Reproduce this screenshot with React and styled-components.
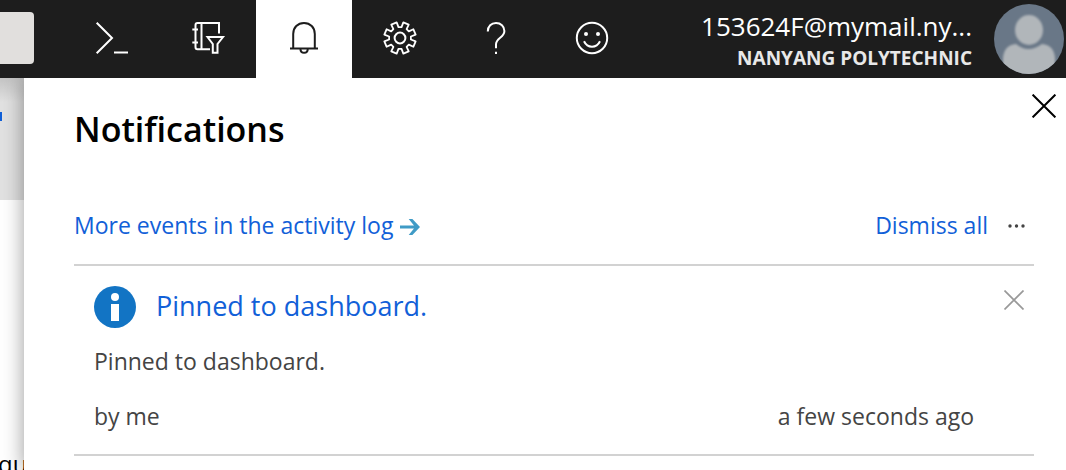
import React from 'react';
import styled, { createGlobalStyle } from 'styled-components';

const GlobalStyle = createGlobalStyle`
  * { box-sizing: border-box; }
  html, body { margin: 0; height: 100%; }
  body {
    overflow: hidden;
    background: #fff;
    color: #000;
    font-family: "Open Sans", "Noto Sans", sans-serif;
    font-size: 23px;
    line-height: 32px;
  }
  #root { height: 100%; }
  button, input { font: inherit; border: 0; padding: 0; margin: 0; }
  button { background: none; color: inherit; cursor: pointer; }
  h1, h2, p { margin: 0; }
  svg { display: block; flex: none; }
`;

const Page = styled.div`
  display: flex;
  flex-direction: column;
  height: 100%;
`;

const TopBar = styled.header`
  display: flex;
  align-items: center;
  flex: none;
  height: 78px;
  padding-right: 2px;
  background: #1d1d1d;
  color: #fff;
`;

const SearchBox = styled.input`
  width: 34px;
  height: 52px;
  margin: 0 30px 2px 0;
  border-radius: 0 4px 4px 0;
  background: #e1dfdd;
`;

const BarButton = styled.button`
  display: flex;
  align-items: center;
  justify-content: center;
  flex: none;
  width: 96px;
  height: 78px;
  background: ${(p) => (p.$active ? '#fff' : 'transparent')};
  color: ${(p) => (p.$active ? '#1d1d1d' : '#fff')};
`;

const Account = styled.button`
  display: flex;
  align-items: center;
  gap: 22px;
  margin-left: auto;
  text-align: right;
`;

const AccountText = styled.span`
  display: flex;
  flex-direction: column;
  padding-top: 6px;
  line-height: 32px;
`;

const Email = styled.span`
  font-size: 26px;
  font-weight: 500;
`;

const Org = styled.span`
  color: #e8e8e8;
  font-size: 19px;
  font-weight: 700;
`;

const Main = styled.div`
  display: flex;
  flex: 1;
  min-height: 0;
`;

const Backdrop = styled.div`
  display: flex;
  flex-direction: column;
  flex: none;
  width: 24px;
  overflow: hidden;
  font-size: 24px;
`;

const BackdropHeader = styled.div`
  flex: none;
  height: 122px;
  padding-top: 34px;
  background: linear-gradient(#c4c4c4, #e1e1e1 24px);
`;

const LinkEdge = styled.div`
  width: 2px;
  height: 9px;
  background: #1160d8;
`;

const BackdropText = styled.span`
  margin: 248px 0 0 -2px;
  white-space: nowrap;
`;

const Panel = styled.section`
  position: relative;
  flex: 1;
  background: #fff;
  box-shadow: 0 0 20px rgba(0, 0, 0, 0.4);
  clip-path: inset(0 0 0 -24px);
`;

const PanelHeader = styled.div`
  display: flex;
  align-items: flex-start;
  justify-content: space-between;
  padding: 16px 10px 0 50px;
`;

const Title = styled.h1`
  margin-top: 11px;
  font-size: 34px;
  font-weight: 600;
  line-height: 48px;
`;

const IconButton = styled.button`
  display: flex;
  align-items: center;
  color: ${(p) => p.$tone || '#000'};
`;

const PanelBody = styled.div`
  padding: 0 32px 0 50px;
`;

const Actions = styled.div`
  display: flex;
  align-items: center;
  gap: 20px;
  padding: 56px 8px 23px 0;
`;

const ActivityLink = styled.a`
  display: flex;
  align-items: center;
  gap: 6px;
  margin-right: auto;
  color: #1160d8;
  text-decoration: none;
`;

const DismissAll = styled.button`
  color: #1160d8;
`;

const Item = styled.article`
  padding: 20px 10px 22px 20px;
  border: solid #d2d2d2;
  border-width: 2px 0;
`;

const ItemHeader = styled.div`
  display: flex;
  align-items: flex-start;
  gap: 20px;
`;

const ItemTitle = styled.h2`
  flex: 1;
  font-size: 27px;
  font-weight: 400;
  line-height: 40px;

  a { color: #1160d8; text-decoration: none; }
`;

const DismissButton = styled(IconButton)`
  margin-top: 4px;
`;

const ItemText = styled.p`
  margin-top: 17px;
  color: #444;
`;

const ItemMeta = styled.div`
  display: flex;
  justify-content: space-between;
  margin-top: 23px;
  padding-right: 50px;
  color: #444;
`;

const gearPath = (() => {
  const points = [];
  for (let tooth = 0; tooth < 8; tooth += 1) {
    [[8, 11], [12, 16], [33, 16], [37, 11]].forEach(([angle, radius]) => {
      const a = ((tooth * 45 + angle) * Math.PI) / 180;
      points.push(`${(20 + radius * Math.sin(a)).toFixed(2)} ${(19 - radius * Math.cos(a)).toFixed(2)}`);
    });
  }
  return `M${points.join('L')}Z`;
})();

const BarIcon = ({ children }) => (
  <svg width="40" height="40" viewBox="0 0 40 40" fill="none" stroke="currentColor" strokeWidth="2" aria-hidden="true">
    {children}
  </svg>
);

const ShellIcon = () => (
  <BarIcon><path d="M4.7 3.8L20 19L4.7 34.2M22 33.5H36" /></BarIcon>
);

const DirectoryIcon = () => (
  <BarIcon>
    <path d="M31 14.5V4H9.5Q7.5 4 7.5 6V28Q7.5 30.2 9.5 30.2H22M13.5 4V30M4.3 10.5H10M4.3 23.5H10" />
    <path d="M19.5 18H35L29.5 25V33.8H24.8V25Z" />
  </BarIcon>
);

const BellIcon = () => (
  <BarIcon>
    <path d="M9.2 29V15C9.2 8.5 13.8 4 20 4S30.8 8.5 30.8 15V29M6 29.4H34M16.4 29.4C16.4 35.2 23.8 35.2 23.8 29.4" />
  </BarIcon>
);

const GearIcon = () => (
  <BarIcon>
    <path d={gearPath} strokeLinejoin="round" strokeWidth="1.8" />
    <circle cx="20" cy="19" r="5.4" />
  </BarIcon>
);

const HelpIcon = () => (
  <BarIcon>
    <path d="M11.8 12.4C11.8 7.2 15.3 4 20 4S28.4 7.2 28.4 12C28.4 18.5 20 19 20 25.3V29.3M20 32.8V35" />
  </BarIcon>
);

const SmileIcon = () => (
  <BarIcon>
    <circle cx="20" cy="19" r="15.2" />
    <path d="M12 22.3C15.5 29.6 24.5 29.6 28 22.3" />
    <circle cx="14" cy="15" r="2" fill="currentColor" stroke="none" />
    <circle cx="26" cy="15" r="2" fill="currentColor" stroke="none" />
  </BarIcon>
);

const Avatar = () => (
  <svg width="70" height="70" viewBox="0 0 70 70" aria-hidden="true">
    <defs>
      <clipPath id="avatar-clip"><circle cx="35" cy="35" r="35" /></clipPath>
      <filter id="avatar-soft"><feGaussianBlur stdDeviation="0.8" /></filter>
    </defs>
    <g clipPath="url(#avatar-clip)">
      <rect width="70" height="70" fill="#697787" />
      <g fill="#b1b6ba" filter="url(#avatar-soft)">
        <path d="M9 72V54Q10 41 22 40Q34 50 48 40Q60 41 61 54V72Z" />
        <ellipse cx="35" cy="26" rx="14" ry="15" />
      </g>
    </g>
  </svg>
);

const CloseIcon = ({ size, weight }) => (
  <svg width={size} height={size} viewBox="0 0 24 24" stroke="currentColor" strokeWidth={weight} aria-hidden="true">
    <path d="M0.6 0.6L23.4 23.4M23.4 0.6L0.6 23.4" />
  </svg>
);

const ArrowIcon = () => (
  <svg width="22" height="20" viewBox="0 0 22 20" fill="#3f9bc6" aria-hidden="true">
    <path d="M1 10.5H15L9.7 4H13.4L21 12L13.4 20H9.7L15 13.5H1Z" />
  </svg>
);

const MoreIcon = () => (
  <svg width="18" height="6" viewBox="0 0 18 6" fill="#444" aria-hidden="true">
    <circle cx="2" cy="4" r="1.7" />
    <circle cx="8.5" cy="4" r="1.7" />
    <circle cx="15" cy="4" r="1.7" />
  </svg>
);

const InfoIcon = () => (
  <svg width="42" height="42" viewBox="0 0 42 42" aria-hidden="true">
    <circle cx="21" cy="21" r="21" fill="#1274c4" />
    <circle cx="21" cy="11" r="4" fill="#fff" />
    <rect x="17" y="18" width="8" height="17" fill="#fff" />
  </svg>
);

const tools = [
  { label: 'Cloud Shell', Icon: ShellIcon },
  { label: 'Directory and subscription filter', Icon: DirectoryIcon },
  { label: 'Notifications', Icon: BellIcon, active: true },
  { label: 'Settings', Icon: GearIcon },
  { label: 'Help', Icon: HelpIcon },
  { label: 'Feedback', Icon: SmileIcon },
];

export default function App() {
  return (
    <Page>
      <GlobalStyle />
      <TopBar>
        <SearchBox type="text" aria-label="Search" />
        {tools.map(({ label, Icon, active }) => (
          <BarButton key={label} type="button" aria-label={label} $active={active}>
            <Icon />
          </BarButton>
        ))}
        <Account type="button">
          <AccountText>
            <Email>153624F@mymail.ny...</Email>
            <Org>NANYANG POLYTECHNIC</Org>
          </AccountText>
          <Avatar />
        </Account>
      </TopBar>
      <Main>
        <Backdrop>
          <BackdropHeader><LinkEdge /></BackdropHeader>
          <BackdropText>qu</BackdropText>
        </Backdrop>
        <Panel>
          <PanelHeader>
            <Title>Notifications</Title>
            <IconButton type="button" aria-label="Close">
              <CloseIcon size={24} weight={2} />
            </IconButton>
          </PanelHeader>
          <PanelBody>
            <Actions>
              <ActivityLink href="#activity">
                More events in the activity log
                <ArrowIcon />
              </ActivityLink>
              <DismissAll type="button">Dismiss all</DismissAll>
              <IconButton type="button" aria-label="More"><MoreIcon /></IconButton>
            </Actions>
            <Item>
              <ItemHeader>
                <InfoIcon />
                <ItemTitle><a href="#dashboard">Pinned to dashboard.</a></ItemTitle>
                <DismissButton type="button" aria-label="Dismiss" $tone="#999">
                  <CloseIcon size={20} weight={2} />
                </DismissButton>
              </ItemHeader>
              <ItemText>Pinned to dashboard.</ItemText>
              <ItemMeta>
                <span>by me</span>
                <span>a few seconds ago</span>
              </ItemMeta>
            </Item>
          </PanelBody>
        </Panel>
      </Main>
    </Page>
  );
}
